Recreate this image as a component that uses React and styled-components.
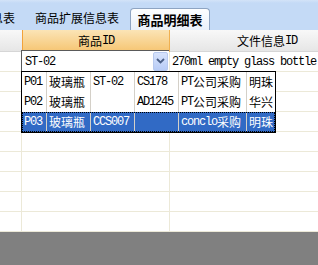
import React from 'react';
import styled, { createGlobalStyle, css } from 'styled-components';

const GlobalStyle = createGlobalStyle`
  html, body { margin: 0; padding: 0; }
  body {
    width: 318px; height: 265px; overflow: hidden; background: #808080;
    font-family: "Noto Sans CJK SC", "Noto Sans", sans-serif; font-size: 12px; color: #000;
  }
  * { box-sizing: border-box; }
`;

const Page = styled.div`
  display: flex; flex-direction: column;
  width: 318px; height: 265px; overflow: hidden; background: #808080;
`;

const Mono = styled.span`
  font-family: "Liberation Mono", "DejaVu Sans Mono", monospace;
  font-size: 12px;
  letter-spacing: -1.2px;
`;

const Txt = ({ children }) =>
  String(children)
    .split(/([\x20-\x7e]+)/)
    .filter(Boolean)
    .map((s, i) =>
      /^[\x20-\x7e]+$/.test(s) ? <Mono key={i}>{s}</Mono> : <span key={i}>{s}</span>
    );

const TabStrip = styled.div`
  flex: 0 0 30px;
  display: flex;
  align-items: flex-end;
  background: linear-gradient(#d3e3f8 0, #c4daf6 3px, #c4daf6 100%);
  overflow: hidden;
`;

const Tab = styled.div`
  height: 30px;
  display: flex; align-items: center;
  padding: 6px 10px 0;
  font-size: 12px; line-height: 16px;
  white-space: nowrap;
  ${(p) => p.$clip && css`
    width: ${p.$clip}px;
    justify-content: flex-end;
    overflow: hidden;
    & > span { flex-shrink: 0; }
  `}
  ${(p) => p.$active && css`
    height: 22px;
    width: 80px;
    margin-left: 1px;
    padding: 0;
    justify-content: center;
    font-size: 13px; font-weight: bold;
    background: linear-gradient(#fdfeff, #e9f0fa);
    border: 1px solid #8ea4c2; border-bottom: none;
    border-radius: 4px 4px 0 0;
  `}
`;

const Grid = styled.div`
  position: relative;
  background: #fff;
`;

const GridRow = styled.div`
  display: grid;
  grid-template-columns: 22px 148px 195px;
  height: ${(p) => p.$h}px;
`;

const HeadCell = styled.div`
  display: flex; align-items: center; justify-content: center;
  line-height: 16px; white-space: nowrap; overflow: hidden;
  background: linear-gradient(#f8f8f8, #e6e6e6);
  border-right: 1px solid #d6d6d6;
  border-bottom: 1px solid #d6d6d6;
  ${(p) => p.$corner && css`border-right: none;`}
  ${(p) => p.$selected && css`
    background: linear-gradient(#fbe4b6, #f6c674);
    border-left: 1px solid #f2a23a;
    border-right: 1px solid #f0b050;
    border-bottom: 1px solid #e9b35c;
  `}
`;

const Cell = styled.div`
  display: flex; align-items: center;
  padding-left: 2px;
  white-space: nowrap; overflow: hidden;
  line-height: 16px;
  border-right: 1px solid #ece9d8;
  border-bottom: 1px solid #ece9d8;
  ${(p) => p.$edit && css`overflow: visible; padding: 0;`}
`;

const Combo = styled.div`
  display: flex; align-items: center;
  width: 149px; height: 21px;
  margin: -2px 0 0 -1px;
  align-self: flex-start;
  background: #fff;
  border-top: 1px solid #5a5a5a;
  border-left: 1px solid #5a5a5a;
`;

const ComboText = styled.div`
  flex: 1; padding-left: 3px; line-height: 16px;
`;

const ComboButton = styled.div`
  width: 15px; height: 19px; margin-right: 1px;
  display: flex; align-items: center; justify-content: center;
  border: 1px solid #b7c9ee; border-radius: 2px;
  background: linear-gradient(#d7e3fc, #b8ccf6);
`;

const Dropdown = styled.div`
  position: absolute; top: 41px; left: 21px; z-index: 2;
  width: 255px;
  background: #fff;
  border: 1px solid #000;
`;

const DropRow = styled.div`
  display: grid;
  grid-template-columns: 25px 44px 44px 44px 68px 1fr;
  height: 20px;
  ${(p) => p.$selected && css`
    background: #316ac5; color: #fff;
    outline: 1px dotted #000; outline-offset: -1px;
  `}
`;

const DropCell = styled.div`
  display: flex; align-items: center;
  padding-left: 2px;
  line-height: 16px; white-space: nowrap; overflow: hidden;
  border-right: 1px solid #d4d0c8;
  &:last-child { border-right: none; }
`;

const Backdrop = styled.div`
  flex: 1; background: #808080;
`;

const options = [
  ['P01', '玻璃瓶', 'ST-02', 'CS178', 'PT公司采购', '明珠'],
  ['P02', '玻璃瓶', '', 'AD1245', 'PT公司采购', '华兴'],
  ['P03', '玻璃瓶', 'CCS007', '', 'conclo采购', '明珠'],
];

export default function App() {
  return (
    <Page>
      <GlobalStyle />
      <TabStrip>
        <Tab $clip={25}><span>信息表</span></Tab>
        <Tab>商品扩展信息表</Tab>
        <Tab $active>商品明细表</Tab>
      </TabStrip>
      <Grid>
        <GridRow $h={22}>
          <HeadCell $corner />
          <HeadCell $selected><Txt>商品ID</Txt></HeadCell>
          <HeadCell><Txt>文件信息ID</Txt></HeadCell>
        </GridRow>
        <GridRow $h={20}>
          <Cell />
          <Cell $edit>
            <Combo>
              <ComboText><Txt>ST-02</Txt></ComboText>
              <ComboButton>
                <svg width="9" height="6" viewBox="0 0 9 6">
                  <polyline points="1,1 4.5,4.5 8,1" fill="none" stroke="#4a5f86" strokeWidth="1.8" />
                </svg>
              </ComboButton>
            </Combo>
          </Cell>
          <Cell><Txt>270ml empty glass bottle</Txt></Cell>
        </GridRow>
        {Array.from({ length: 8 }).map((_, i) => (
          <GridRow $h={20} key={i}>
            <Cell />
            <Cell />
            <Cell />
          </GridRow>
        ))}
        <Dropdown>
          {options.map((r, i) => (
            <DropRow key={i} $selected={i === 2}>
              {r.map((c, j) => (
                <DropCell key={j}>{c && <Txt>{c}</Txt>}</DropCell>
              ))}
            </DropRow>
          ))}
        </Dropdown>
      </Grid>
      <Backdrop />
    </Page>
  );
}
